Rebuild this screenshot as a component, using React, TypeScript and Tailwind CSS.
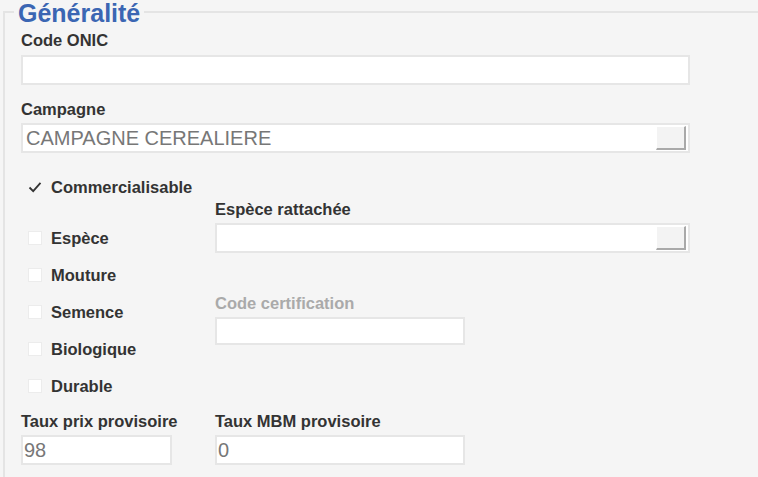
import React from 'react';

const label = "block text-[16.5px] font-bold leading-[20px] text-[#333]";
const box = "box-border bg-white border-2 border-[#e6e6e6]";

function PickButton() {
  return (
    <span className="ml-auto mr-[2px] h-[24px] w-[30px] box-border bg-[#f3f3f3] border-t border-l border-t-white border-l-white border-r-2 border-b-2 border-r-[#a9a9a9] border-b-[#a9a9a9]" />
  );
}

function Check({ checked, text }: { checked?: boolean; text: string }) {
  return (
    <div className="flex items-center h-[37px] pl-[7px]">
      {checked ? (
        <span className="w-[14px] h-[14px] flex items-center justify-center">
          <svg width="14" height="14" viewBox="0 0 14 14">
            <polyline points="1.5,7.5 5.2,11.2 12.5,2.8" fill="none" stroke="#333" strokeWidth="1.8" />
          </svg>
        </span>
      ) : (
        <span className="w-[14px] h-[14px] box-border bg-white border border-[#ececec]" />
      )}
      <span className="ml-[9px] text-[16.5px] font-bold leading-[20px] text-[#333]">{text}</span>
    </div>
  );
}

export default function App() {
  return (
    <div className="h-[477px] overflow-hidden bg-[#f5f5f5] font-['Liberation_Sans',Arial,sans-serif]">
      <fieldset className="ml-[3px] min-h-[520px] border-2 border-r-0 border-b-0 border-[#e4e4e4] pl-[16px] pt-[7px]">
        <legend className="-ml-[7px] px-[4px] pt-[4px] text-[25px] font-bold leading-[19px] text-[#3b66b3]">Généralité</legend>

        <span className={label}>Code ONIC</span>
        <div className={`${box} mt-[5px] h-[30px] w-[669px]`} />

        <span className={`${label} mt-[14px]`}>Campagne</span>
        <div className={`${box} mt-[4px] h-[30px] w-[669px] flex items-center pl-[3px] text-[20px] text-[#777]`}>
          CAMPAGNE CEREALIERE
          <PickButton />
        </div>

        <div className="flex mt-[15px]">
          <div className="w-[194px] flex flex-col">
            <div className="mb-[14px]">
              <Check checked text="Commercialisable" />
            </div>
            <Check text="Espèce" />
            <Check text="Mouture" />
            <Check text="Semence" />
            <Check text="Biologique" />
            <Check text="Durable" />
          </div>
          <div className="flex flex-col pt-[31px]">
            <span className={label}>Espèce rattachée</span>
            <div className={`${box} mt-[4px] h-[30px] w-[475px] flex items-center`}>
              <PickButton />
            </div>
            <span className="mt-[40px] block text-[16.5px] font-bold leading-[20px] text-[#aaa]">Code certification</span>
            <div className={`${box} mt-[4px] h-[28px] w-[250px]`} />
          </div>
        </div>

        <div className="flex mt-[7px]">
          <div className="w-[194px]">
            <span className={label}>Taux prix provisoire</span>
            <div className={`${box} mt-[4px] h-[30px] w-[151px] flex items-center pl-[1px] text-[20px] text-[#777]`}>98</div>
          </div>
          <div>
            <span className={label}>Taux MBM provisoire</span>
            <div className={`${box} mt-[4px] h-[30px] w-[250px] flex items-center pl-[1px] text-[20px] text-[#777]`}>0</div>
          </div>
        </div>
      </fieldset>
    </div>
  );
}
